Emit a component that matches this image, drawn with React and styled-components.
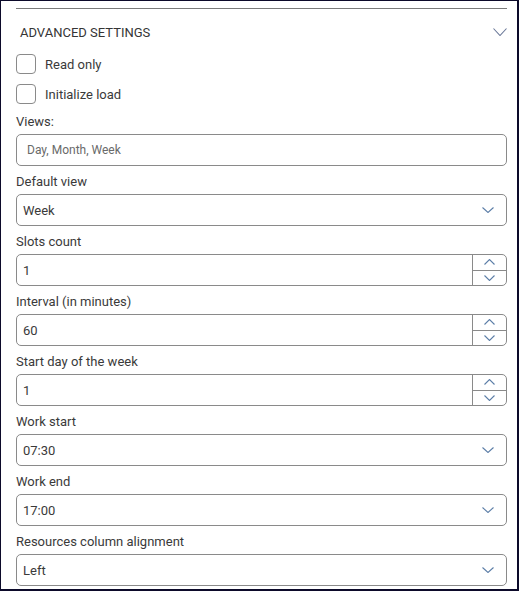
import React from "react";
import styled, {createGlobalStyle} from "styled-components";

const GlobalStyle = createGlobalStyle`
	html, body {
		margin: 0;
		padding: 0;
		background: #ffffff;
	}
	body {
		font-family: Roboto, "Liberation Sans", Arial, sans-serif;
		color: #3a3a3a;
	}
`;

const Frame = styled.div`
	width: 519px;
	height: 591px;
	box-sizing: border-box;
	border-style: solid;
	border-color: #0c0a2a;
	border-width: 1px 2px 2px 1px;
	padding: 7px 10px 0 15px;
	overflow: hidden;
	display: flex;
	flex-direction: column;
	& > * {
		flex-shrink: 0;
	}
`;

const Divider = styled.div`
	height: 1px;
	background: #7a7a7a;
`;

const Header = styled.div`
	height: 45px;
	padding-top: 1px;
	box-sizing: border-box;
	display: flex;
	align-items: center;
	justify-content: space-between;
	padding-left: 4px;
	font-size: 13px;
	text-transform: uppercase;
	color: #353535;
`;

const CheckList = styled.div`
	display: flex;
	flex-direction: column;
	gap: 10px;
	margin-bottom: 8px;
`;

const CheckRow = styled.label`
	display: flex;
	align-items: center;
	gap: 9px;
	height: 20px;
	font-size: 13px;
	color: #3a3a3a;
`;

const Box = styled.span`
	width: 18px;
	height: 18px;
	border: 1px solid #8a8a8a;
	border-radius: 4px;
	flex: none;
`;

const Field = styled.div`
	display: flex;
	flex-direction: column;
	gap: 2px;
	margin-bottom: 6px;
`;

const Label = styled.div`
	font-size: 13px;
	line-height: 20px;
	color: #3a3a3a;
`;

const Control = styled.div`
	height: 32px;
	box-sizing: border-box;
	border: 1px solid #8a8a8a;
	border-radius: 5px;
	display: flex;
	align-items: stretch;
	overflow: hidden;
`;

const Value = styled.div`
	flex: 1;
	display: flex;
	align-items: center;
	padding-left: ${p => p.$inset || 6}px;
	font-size: ${p => p.$placeholder ? 12 : 13}px;
	color: ${p => p.$placeholder ? "#6a6a6a" : "#3a3a3a"};
`;

const Caret = styled.div`
	width: 32px;
	display: flex;
	align-items: center;
	justify-content: center;
	padding-right: 2px;
`;

const Spinner = styled.div`
	width: 33px;
	border-left: 1px solid #8a8a8a;
	display: flex;
	flex-direction: column;
`;

const SpinButton = styled.div`
	flex: 1;
	display: flex;
	align-items: center;
	justify-content: center;
	& + & {
		border-top: 1px solid #8a8a8a;
	}
`;

function Chevron({w = 12, h = 6, up = false, color = "#5d7fa8"}) {
	const d = up ? `M0.5 ${h - 0.5} L${w / 2} 0.5 L${w - 0.5} ${h - 0.5}` : `M0.5 0.5 L${w / 2} ${h - 0.5} L${w - 0.5} 0.5`;
	return <svg width={w} height={h} viewBox={`0 0 ${w} ${h}`}>
		<path d={d} fill="none" stroke={color} strokeWidth="1.1"/>
	</svg>;
}

function SelectField({label, value}) {
	return <Field>
		<Label>{label}</Label>
		<Control>
			<Value>{value}</Value>
			<Caret><Chevron/></Caret>
		</Control>
	</Field>;
}

function NumberField({label, value}) {
	return <Field>
		<Label>{label}</Label>
		<Control>
			<Value>{value}</Value>
			<Spinner>
				<SpinButton><Chevron w={11} h={6} up/></SpinButton>
				<SpinButton><Chevron w={11} h={6}/></SpinButton>
			</Spinner>
		</Control>
	</Field>;
}

export default function App() {
	return <>
		<GlobalStyle/>
		<Frame>
			<Divider/>
			<Header>
				<span>Advanced settings</span>
				<Chevron w={14} h={8} color="#6a7898"/>
			</Header>
			<CheckList>
				<CheckRow><Box/>Read only</CheckRow>
				<CheckRow><Box/>Initialize load</CheckRow>
			</CheckList>
			<Field>
				<Label>Views:</Label>
				<Control>
					<Value $placeholder $inset={10}>Day, Month, Week</Value>
				</Control>
			</Field>
			<SelectField label="Default view" value="Week"/>
			<NumberField label="Slots count" value="1"/>
			<NumberField label="Interval (in minutes)" value="60"/>
			<NumberField label="Start day of the week" value="1"/>
			<SelectField label="Work start" value="07:30"/>
			<SelectField label="Work end" value="17:00"/>
			<SelectField label="Resources column alignment" value="Left"/>
		</Frame>
	</>;
}
